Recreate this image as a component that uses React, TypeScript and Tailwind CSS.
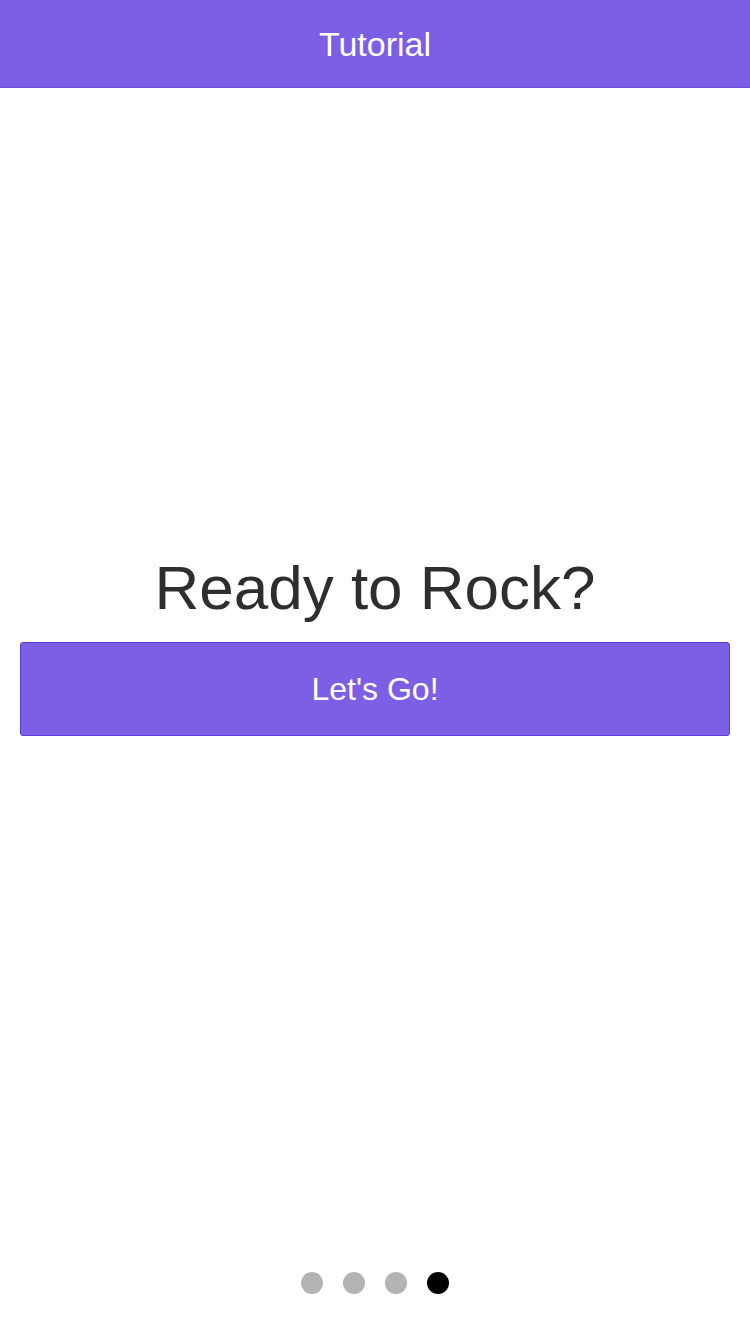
export default function App() {
  const dots = [false, false, false, true];

  return (
    <div
      className="flex h-[1334px] w-[750px] flex-col bg-white"
      style={{ fontFamily: '"Liberation Sans", Arial, sans-serif' }}
    >
      <header className="flex h-[88px] shrink-0 items-center justify-center border-b border-[#6a4ddc] bg-[#7d5fe6]">
        <h1 className="text-[34px] leading-none text-white">Tutorial</h1>
      </header>

      <main className="flex flex-1 flex-col px-5 pt-[464px]">
        <h2 className="text-center text-[62px] leading-[72px] text-[#2e2e2e]">Ready to Rock?</h2>
        <button className="mt-[18px] flex h-[94px] w-full items-center justify-center rounded-[3px] border border-[#5a3fdb] bg-[#7d5fe6] text-[32px] text-white">
          Let's Go!
        </button>
      </main>

      <div className="flex justify-center gap-5 pb-10">
        {dots.map((active, i) => (
          <span
            key={i}
            className={`h-[22px] w-[22px] rounded-full ${active ? "bg-black" : "bg-[#b3b3b3]"}`}
          />
        ))}
      </div>
    </div>
  );
}
